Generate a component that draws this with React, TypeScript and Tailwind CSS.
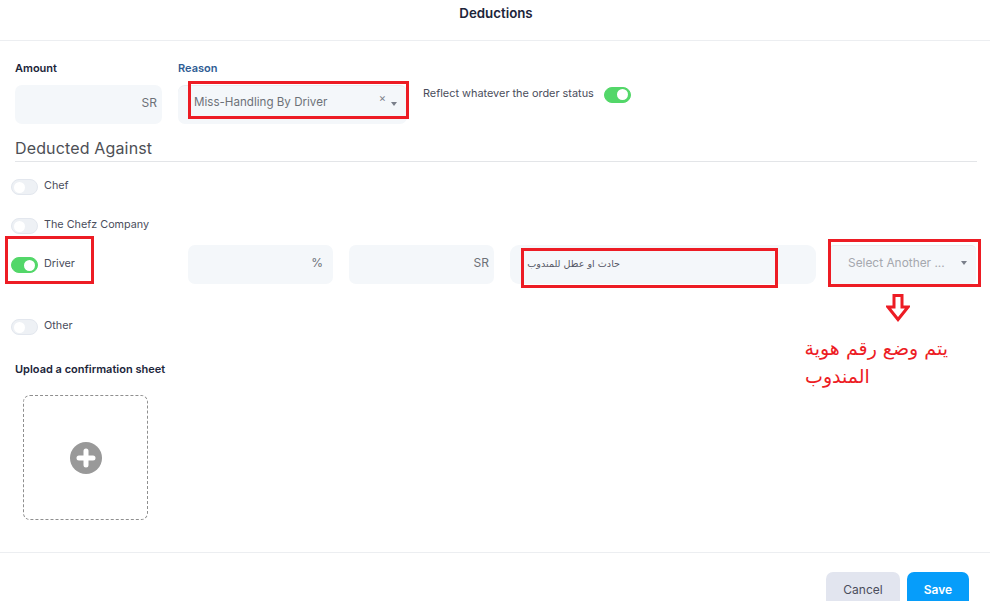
const font = { fontFamily: 'Inter, "Noto Sans", sans-serif' }

function Toggle({ on = false }: { on?: boolean }) {
  return (
    <span
      className={`flex h-[16px] w-[27px] shrink-0 items-center rounded-full border px-[2px] ${
        on ? 'justify-end border-[#53d769] bg-[#53d769]' : 'justify-start border-[#e3e7ee] bg-[#eef1f5]'
      }`}
    >
      <span className="h-[11px] w-[11px] rounded-full bg-white" />
    </span>
  )
}

function Caret() {
  return (
    <svg width="6" height="4" viewBox="0 0 6 4" className="shrink-0">
      <path d="M0 0h6L3 4z" fill="#7a7f8a" />
    </svg>
  )
}

function AmountField({ unit, width, pad = 'pr-[5px]' }: { unit: string; width: string; pad?: string }) {
  return (
    <div className={`flex h-[39px] items-center justify-end rounded-[7px] bg-[#f4f7fa] pb-[3px] text-[12px] text-[#6d7178] ${width} ${pad}`}>
      {unit}
    </div>
  )
}

function SwitchRow({ label, on, className }: { label: string; on?: boolean; className: string }) {
  return (
    <div className={`flex items-center gap-[6px] pl-[11px] text-[10.8px] text-[#4a4d5c] ${className}`}>
      <Toggle on={on} />
      <span className="-mt-[1px]">{label}</span>
    </div>
  )
}

export default function App() {
  return (
    <div className="relative h-[601px] w-[990px] overflow-hidden bg-white" style={font}>
      <div className="h-[41px] border-b border-[#eceef1] pt-[5px] pl-[2px] text-center text-[13.3px] leading-[16px] font-semibold text-[#20253a]">
        Deductions
      </div>

      <div className="flex gap-[16px] pt-[20px] pl-[15px]">
        <div className="w-[147px]">
          <div className="mb-[10px] h-[14px] text-[11px] leading-[14px] font-semibold text-[#20253a]">Amount</div>
          <AmountField unit="SR" width="w-[147px]" />
        </div>
        <div className="w-[229px]">
          <div className="mb-[10px] h-[14px] text-[11px] leading-[14px] font-semibold text-[#2f5d94]">Reason</div>
          <div className="flex h-[39px] items-center rounded-[7px] border-t border-[#e9edf1] bg-[#f4f7fa] pb-[4px] pl-[16px] text-[11.6px] text-[#6d7178]">
            <span className="flex-1">Miss-Handling By Driver</span>
            <span className="mr-[5px] -mt-[9px] text-[11px] leading-none text-[#7a7f8a]">×</span>
            <span className="mr-[10px] flex pt-[2px]"><Caret /></span>
          </div>
        </div>
        <div className="flex h-[17px] translate-y-[25px] items-center text-[10.9px] text-[#4a4d5c]">
          <span className="-mt-[3px] mr-[10px]">Reflect whatever the order status</span>
          <Toggle on />
        </div>
      </div>

      <div className="mx-[15px] mt-[14px] mr-[13px] border-b border-[#e3e5e8] pb-[3px] text-[16px] leading-[20px] tracking-[0.15px] text-[#4d4f55]">
        Deducted Against
      </div>

      <SwitchRow label="Chef" className="mt-[17px] h-[16px]" />
      <SwitchRow label="The Chefz Company" className="mt-[23px] h-[16px]" />

      <div className="mt-[11px] flex h-[39px] items-center">
        <SwitchRow label="Driver" on className="w-[188px] pt-[1px]" />
        <div className="flex gap-[16px]">
          <AmountField unit="%" width="w-[145px]" pad="pr-[10px]" />
          <AmountField unit="SR" width="w-[145px]" />
          <div dir="rtl" className="flex h-[39px] w-[306px] items-center rounded-[9px] bg-[#f4f7fa] pr-[196px] text-[9.6px] text-[#555866]" style={{ fontFamily: '"DejaVu Sans", sans-serif' }}>
            <span className="whitespace-nowrap">حادث او عطل للمندوب</span>
          </div>
        </div>
        <div className="ml-[13px] flex h-[39px] w-[147px] items-center rounded-[5px] border-t border-[#e9edf1] bg-[#f4f7fa] pr-[9px] pb-[4px] pl-[19px] text-[11.9px] text-[#a5a8ae]">
          <span className="flex-1">Select Another ...</span>
          <Caret />
        </div>
      </div>

      <SwitchRow label="Other" className="mt-[35px] h-[16px]" />

      <div className="mt-[27px] pl-[15px] text-[11px] leading-[14px] font-semibold text-[#20253a]">
        Upload a confirmation sheet
      </div>
      <div className="mt-[19px] ml-[23px] flex h-[125px] w-[125px] items-center justify-center rounded-[7px] border border-dashed border-[#8f8f8f]">
        <svg width="32" height="32" viewBox="0 0 32 32">
          <circle cx="16" cy="16" r="16" fill="#999999" />
          <path d="M16 9v14M9 16h14" stroke="#ffffff" strokeWidth="5" strokeLinecap="round" />
        </svg>
      </div>

      <div className="mt-[32px] flex justify-end gap-[7px] border-t border-[#eceef1] pt-[19px] pr-[21px]">
        <button className="h-[36px] w-[74px] rounded-[7px] bg-[#e2e5ef] text-[12px] text-[#4a4d5c]">Cancel</button>
        <button className="h-[36px] w-[62px] rounded-[7px] bg-[#069dfa] text-[12px] font-semibold text-white">Save</button>
      </div>

      {/* red annotations drawn on top of the screenshot */}
      <div className="absolute top-[81px] left-[188px] h-[38px] w-[221px] border-[3px] border-[#ed1c24]" />
      <div className="absolute top-[236px] left-[5px] h-[48px] w-[89px] border-[3px] border-[#ed1c24]" />
      <div className="absolute top-[248px] left-[521px] h-[40px] w-[257px] border-[3px] border-[#ed1c24]" />
      <div className="absolute top-[239px] left-[828px] h-[48px] w-[153px] border-[3px] border-[#ed1c24]" />
      <svg className="absolute top-[294px] left-[886px]" width="24" height="28" viewBox="0 0 24 28">
        <path d="M8 1.5h8V13h6L12 25.5 2 13h6z" fill="none" stroke="#ed1c24" strokeWidth="3" />
      </svg>
      <div
        dir="rtl"
        className="absolute top-[334px] left-[805px] w-[143px] text-[19px] leading-[28px] whitespace-nowrap text-[#ed1c24]"
        style={{ fontFamily: '"DejaVu Sans", sans-serif' }}
      >
        <div className="text-right">يتم وضع رقم هوية</div>
        <div className="text-left">المندوب</div>
      </div>
    </div>
  )
}
